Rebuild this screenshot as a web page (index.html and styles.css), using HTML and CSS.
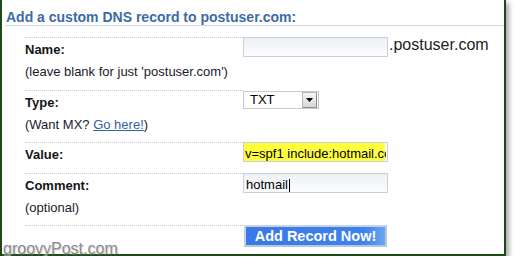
FILE: index.html
```html
<!DOCTYPE html>
<html>
<head>
<meta charset="utf-8">
<link rel="stylesheet" href="styles.css">
</head>
<body>
<div class="frame">
  <h2 class="title">Add a custom DNS record to postuser.com:</h2>
  <div class="form">
    <div class="row first">
      <div class="lab"><div class="name">Name:</div><div class="hint">(leave blank for just 'postuser.com')</div></div>
      <div class="val"><input class="field" type="text" value=""><span class="suffix">.postuser.com</span></div>
    </div>
    <div class="row">
      <div class="lab"><div class="name">Type:</div><div class="hint">(Want MX? <a class="link" href="#">Go here!</a>)</div></div>
      <div class="val">
        <div class="sel"><span class="sel-text">TXT</span><span class="sel-btn"><svg width="7" height="4" viewBox="0 0 7 4"><path d="M0 0h7L3.5 4z" fill="#000"/></svg></span></div>
      </div>
    </div>
    <div class="row short">
      <div class="lab"><div class="name">Value:</div></div>
      <div class="val"><input class="field hl" type="text" value="v=spf1 include:hotmail.com ~all"></div>
    </div>
    <div class="row">
      <div class="lab"><div class="name">Comment:</div><div class="hint">(optional)</div></div>
      <div class="val caret-wrap"><input class="field" type="text" value="hotmail"><span class="caret"></span></div>
    </div>
    <div class="row last">
      <div class="lab"></div>
      <div class="val"><button class="btn" type="button">Add Record Now!</button></div>
    </div>
  </div>
  <div class="wm">groovyPost.com</div>
</div>
</body>
</html>
```
FILE: styles.css
```css
html, body {
  margin: 0;
  padding: 0;
  background: #fff;
}
body {
  font-family: "Liberation Sans", Arial, sans-serif;
}
.frame {
  position: relative;
  box-sizing: border-box;
  width: 506px;
  height: 256px;
  border: 2px solid #1b4a14;
  border-top: none;
  background: #fff;
  box-shadow: 3px 3px 5px rgba(0, 0, 0, 0.35);
}
.title {
  margin: 0 0 0 3px;
  padding: 9px 0 0 1px;
  font-size: 14px;
  line-height: 16px;
  font-weight: bold;
  color: #3d6aa6;
  border-bottom: 1px solid #d4d9e1;
}
.form {
  margin: 11px 0 0 23px;
}
.row {
  display: flex;
}
.lab {
  width: 218px;
  flex: none;
  border-top: 1px dotted #c4c4c4;
  padding: 3px 0 9px;
  font-size: 13px;
  line-height: 17px;
  color: #1a1a2a;
}
.row.first .lab,
.row.short .lab {
  padding-bottom: 10px;
}
.row.last .lab {
  padding-bottom: 0;
  height: 21px;
}
.name {
  font-weight: bold;
  color: #151515;
}
.hint {
  margin-top: 5px;
}
.link {
  color: #2f62a6;
  text-decoration: underline;
}
.val {
  display: flex;
  align-items: flex-start;
}
.field {
  box-sizing: border-box;
  width: 145px;
  height: 20px;
  margin: 0;
  border: 1px solid #c7cfd9;
  padding: 2px 1px 0 2px;
  font-family: "Liberation Sans", Arial, sans-serif;
  font-size: 13px;
  color: #000;
  background: linear-gradient(#edf1f6, #fbfcfd);
  outline: none;
}
.field.hl {
  padding-left: 1px;
  background: #ffff3e;
  box-shadow: inset -2px 0 0 #fff;
}
.suffix {
  margin-left: 1px;
  font-size: 16px;
  line-height: 15px;
  color: #1d1d1d;
}
.sel {
  box-sizing: border-box;
  display: flex;
  align-items: center;
  justify-content: space-between;
  width: 76px;
  height: 18px;
  margin-top: 1px;
  border: 1px solid #c3cbd6;
  background: #fff;
}
.sel-text {
  padding-left: 6px;
  font-size: 13px;
  line-height: 16px;
  color: #000;
}
.sel-btn {
  box-sizing: border-box;
  display: flex;
  align-items: center;
  justify-content: center;
  width: 15px;
  height: 16px;
  margin-right: 1px;
  border: 1px solid #8c8c8c;
  border-top-color: #b8b8b8;
  border-left-color: #b8b8b8;
  background: linear-gradient(#f6f6f6, #d6d6d6);
}
.sel-btn svg {
  display: block;
}
.caret-wrap {
  position: relative;
}
.caret {
  position: absolute;
  left: 46px;
  top: 6px;
  width: 1px;
  height: 13px;
  background: #000;
}
.btn {
  box-sizing: border-box;
  width: 143px;
  height: 22px;
  margin: 0 0 0 1px;
  padding: 0;
  border: 2px solid #c6d2e2;
  border-bottom-color: #b8c6d8;
  border-right-color: #b8c6d8;
  background: linear-gradient(to right, #3a79e6 0%, #3f82ec 85%, #6aa6f2 100%);
  color: #fff;
  font-family: "Liberation Sans", Arial, sans-serif;
  font-size: 14.5px;
  font-weight: bold;
  line-height: 18px;
  cursor: pointer;
}
.wm {
  position: absolute;
  left: 1px;
  top: 241px;
  font-size: 16px;
  line-height: 16px;
  color: #8a8a8a;
  text-shadow: 0 0 2px #fff, 1px 1px 1px rgba(0, 0, 0, 0.25);
}
```
